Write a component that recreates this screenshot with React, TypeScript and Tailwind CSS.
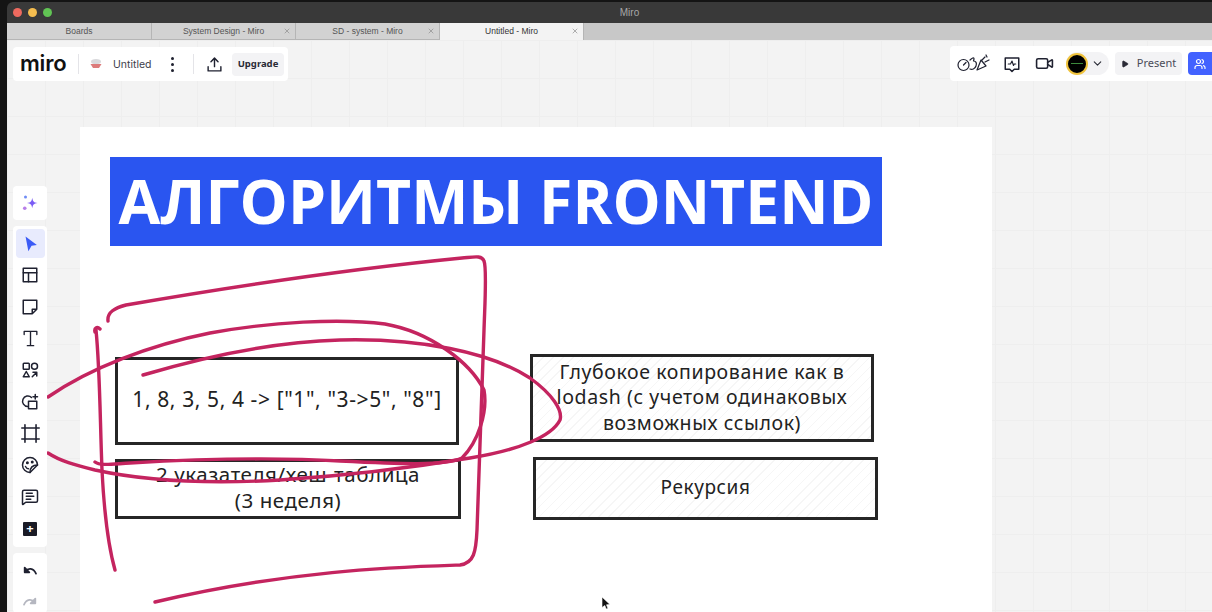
import React from 'react';
import { ChevronDown, MessageSquareText, Play, Users, Video, X } from 'lucide-react';

const sans = 'font-["Noto_Sans",sans-serif]';

const tabs = [
    { title: 'Boards', closable: false, active: false, width: 'w-[145px]' },
    { title: 'System Design - Miro', closable: true, active: false, width: 'w-[144px]' },
    { title: 'SD - system - Miro', closable: true, active: false, width: 'w-[144px]' },
    { title: 'Untitled - Miro', closable: true, active: true, width: 'w-[144px]' },
];

const Icon: React.FC<{ children: React.ReactNode; size?: number }> = ({ children, size = 18 }) => (
    <svg width={size} height={size} viewBox="0 0 24 24" fill="none" stroke="#1f2130" strokeWidth="2" strokeLinecap="round" strokeLinejoin="round">
        {children}
    </svg>
);

const ToolSlot: React.FC<{ children: React.ReactNode; active?: boolean }> = ({ children, active }) => (
    <div className={`w-[29px] h-[29px] mb-[2.7px] flex items-center justify-center rounded ${active ? 'bg-[#e8ebfd]' : ''}`}>{children}</div>
);

const LeftToolbar: React.FC = () => (
    <div className="absolute left-[6px] top-[146px] w-[34px] flex flex-col gap-[6px]">
        <div className="h-[34px] bg-white rounded flex items-center justify-center">
            <svg width="18" height="18" viewBox="0 0 24 24">
                <path d="M15 5 C15.8 10 17 11.4 22 12 C17 12.8 15.8 14 15 19 C14.2 14 13 12.8 8 12 C13 11.4 14.2 10 15 5 Z" fill="#7a5cf5" />
                <circle cx="6" cy="4" r="2" fill="#6f8cf5" />
                <circle cx="5" cy="19" r="2.4" fill="#b77ee8" />
            </svg>
        </div>
        <div className="h-[321px] bg-white rounded flex flex-col items-center pt-[3px]">
            <ToolSlot active>
                <svg width="17" height="17" viewBox="0 0 24 24"><path d="M5 2 L21 14 L13.5 15 L9 23 Z" fill="#3b5bf6" /></svg>
            </ToolSlot>
            <ToolSlot>
                <Icon><rect x="3" y="3" width="18" height="18" /><path d="M3 9 H21 M10 9 V21" /></Icon>
            </ToolSlot>
            <ToolSlot>
                <Icon><path d="M3 3 H21 V15 L15 21 H3 Z M21 15 H15 V21" /></Icon>
            </ToolSlot>
            <ToolSlot>
                <Icon size={19}><path d="M4 7 V3 H20 V7 M12 3 V21 M8 21 H16" strokeWidth="1.7" /></Icon>
            </ToolSlot>
            <ToolSlot>
                <Icon>
                    <rect x="3" y="3" width="8" height="8" rx="1" />
                    <circle cx="18" cy="7" r="4" />
                    <path d="M7 14 L11 21 H3 Z M15 21 L21 15 M16 15 H21 V20" />
                </Icon>
            </ToolSlot>
            <ToolSlot>
                <Icon>
                    <path d="M9 18 A7 7 0 1 1 14 6" />
                    <rect x="10" y="11" width="11" height="10" />
                    <path d="M19 2 V8 M16 5 H22" />
                </Icon>
            </ToolSlot>
            <ToolSlot>
                <Icon size={19}><path d="M5 1 V23 M19 1 V23 M1 5 H23 M1 19 H23" /></Icon>
            </ToolSlot>
            <ToolSlot>
                <Icon>
                    <path d="M12 22 A10 10 0 1 1 22 12 L12 22 Z" />
                    <path d="M12 22 C12 16 15 12 22 12" />
                    <circle cx="8.5" cy="9" r="1" fill="#1f2130" />
                    <circle cx="15" cy="8" r="1" fill="#1f2130" />
                    <path d="M6 14 C7 16 8.5 17 10 17" />
                </Icon>
            </ToolSlot>
            <ToolSlot>
                <MessageSquareText size={18} color="#1f2130" strokeWidth={2} />
            </ToolSlot>
            <ToolSlot>
                <div className="w-[14px] h-[14px] bg-[#1a1b26] rounded-[1px] flex items-center justify-center text-white font-bold text-[13px] leading-none">+</div>
            </ToolSlot>
        </div>
        <div className="h-[60px] bg-white rounded flex flex-col items-center pt-[10px] gap-[15px]">
            <svg width="16" height="16" viewBox="0 0 24 24" fill="none" stroke="#1f2130" strokeWidth="2.6" strokeLinecap="round" strokeLinejoin="round">
                <path d="M4 7 L4 14 L11 14 Z" fill="#1f2130" />
                <path d="M5 13 C9 7 17 7 21 16" />
            </svg>
            <svg width="16" height="16" viewBox="0 0 24 24" fill="none" stroke="#b5b7c0" strokeWidth="2.6" strokeLinecap="round" strokeLinejoin="round">
                <path d="M20 7 L20 14 L13 14 Z" fill="#b5b7c0" />
                <path d="M19 13 C15 7 7 7 3 16" />
            </svg>
        </div>
    </div>
);

const TopLeftPanel: React.FC = () => (
    <div className="absolute left-[6px] top-[7px] w-[275px] h-[34px] bg-white rounded flex items-center">
        <span className='ml-[7px] w-[47px] font-["Inter",sans-serif] font-semibold text-[22px] leading-none tracking-[-0.2px] text-[#111] pb-[3px]'>miro</span>
        <div className="ml-[11px] w-px h-[20px] bg-[#e4e4e8]" />
        <svg className="ml-[10px]" width="14" height="14" viewBox="0 0 14 14">
            <ellipse cx="7" cy="4.5" rx="5" ry="2.6" fill="#d9d9dc" />
            <path d="M1.5 7 H12.5 L10 11 H4 Z" fill="#dc7b7b" />
        </svg>
        <span className='font-["Inter",sans-serif] ml-[10px] w-[38px] pt-[1px] text-[10.5px] whitespace-nowrap text-[#3d3e4a]'>Untitled</span>
        <div className="ml-[20px] flex flex-col gap-[3px]">
            <div className="w-[3px] h-[3px] rounded-full bg-[#1f2130]" />
            <div className="w-[3px] h-[3px] rounded-full bg-[#1f2130]" />
            <div className="w-[3px] h-[3px] rounded-full bg-[#1f2130]" />
        </div>
        <div className="ml-[19px] w-px h-[20px] bg-[#e4e4e8]" />
        <div className="ml-[12px]">
            <Icon size={17}><path d="M12 15 V3 M7 8 L12 3 L17 8 M3 15 V21 H21 V15" /></Icon>
        </div>
        <div className={`${sans} ml-[9px] w-[52px] h-[23px] rounded bg-[#f3f3f5] flex items-center justify-center text-[9.5px] font-bold text-[#2a2b36]`}>Upgrade</div>
    </div>
);

const TopRightPanel: React.FC = () => (
    <div className="absolute left-[943px] top-[6px] w-[262px] h-[35px] bg-white rounded-l flex items-center">
        <svg className="ml-[7px]" width="33" height="20" viewBox="0 0 33 20" fill="none" stroke="#1f2130" strokeWidth="1.2" strokeLinecap="round" strokeLinejoin="round">
            <circle cx="6.5" cy="11" r="5.5" />
            <path d="M6.5 11 L9 8.5" />
            <path d="M13 6 C15 4 17 3 17 5 L16.5 7 C19 7 20 9 19 12 C18 15 15 16 13 15" />
            <path d="M20 16 L24 6 L29 12 Z M25 6 L28 3 M28 8 L32 6 M29 1 L30 3" />
        </svg>
        <div className="ml-[13px]">
            <svg width="18" height="18" viewBox="0 0 24 24" fill="none" stroke="#1f2130" strokeWidth="2" strokeLinecap="round" strokeLinejoin="round">
                <path d="M3 4 H21 V19 H15 L12 22 L9 19 H3 Z" />
                <path d="M7 12 H10 L12 8 L14 14 L15 12 H17" strokeWidth="1.5" />
            </svg>
        </div>
        <Video className="ml-[14px]" size={19} color="#1f2130" strokeWidth={2} />
        <div className="ml-[12px] w-[43px] h-[23px] rounded-full bg-[#f3f3f5] flex items-center">
            <div className="w-[22px] h-[22px] rounded-full bg-black border-2 border-[#f0c33c] flex items-center justify-center">
                <div className="w-[12px] h-px bg-[#3c8a3c]" />
            </div>
            <ChevronDown className="ml-[3px]" size={13} color="#2a2b36" strokeWidth={2} />
        </div>
        <div className={`${sans} ml-[6px] w-[67px] h-[23px] rounded bg-[#f3f3f5] flex items-center justify-center gap-[8px] text-[11px] text-[#4a4b57]`}>
            <Play size={8} fill="#2a2b36" color="#2a2b36" />
            <span>Present</span>
        </div>
        <div className="ml-[6px] flex-1 h-[23px] rounded-l bg-[#4262ff] flex items-center pl-[6px]">
            <Users size={12} color="white" strokeWidth={2.4} />
        </div>
    </div>
);

const hatch = 'bg-[repeating-linear-gradient(135deg,#f6f6f6_0px,#f6f6f6_1px,#ffffff_1px,#ffffff_7px)]';
const boxBase = `${sans} absolute border-[3px] border-[#262626] flex items-center justify-center text-center text-[#222] tracking-[0.6px]`;

const Scribbles: React.FC = () => (
    <svg className="absolute left-[-7px] top-[-40px] pointer-events-none" width="1212" height="612" viewBox="0 0 1212 612" fill="none" stroke="#c4245f" strokeWidth="3.4" strokeLinecap="round" strokeLinejoin="round">
        <path d="M108 321 C107 312 115 308 126 305 C230 287 360 268 462 258 C474 257 482 255 484 261 C487 268 485 300 484 330 C482 400 479 470 477 530 C476 552 474 563 460 565 C400 567 290 570 155 602" />
        <path d="M95 332 C94 328 97 326 100 329 M96 330 C100 370 100 420 102 470 C104 510 108 545 115 570" />
        <path d="M48 397 C90 368 150 345 210 333 C270 322 340 318 385 324 C430 332 470 362 484 390 C488 412 478 442 462 458 C445 466 400 464 340 461 C270 457 200 459 130 463 C112 464 100 466 95 462" />
        <path d="M143 375 C200 358 270 342 340 340 C420 338 490 352 530 378 C552 394 563 410 560 420 C552 436 520 450 470 458 C410 468 340 476 280 480 C210 484 150 482 95 470 C75 465 60 461 48 453" />
    </svg>
);

const Board: React.FC = () => (
    <div className="absolute left-[73px] top-[87px] w-[912px] h-[485px] bg-white">
        <div className='absolute left-[30px] top-[30px] w-[772px] h-[89px] bg-[#2a55f0] flex items-center justify-center font-["Open_Sans",sans-serif] font-bold text-[60.7px] text-white whitespace-nowrap leading-none'>
            АЛГОРИТМЫ FRONTEND
        </div>
        <div className={`${boxBase} left-[35px] top-[230px] w-[344px] h-[88px] text-[21px] pb-[2px]`}>1, 8, 3, 5, 4 -&gt; ["1", "3-&gt;5", "8"]</div>
        <div className={`${boxBase} left-[35px] top-[332px] w-[346px] h-[60px] text-[20.5px] leading-[26px] pb-[4px]`}>2 указателя/хеш-таблица<br />(3 неделя)</div>
        <div className={`${boxBase} ${hatch} left-[450px] top-[227px] w-[344px] h-[88px] text-[19.5px] leading-[25.5px] pb-[2px]`}>Глубокое копирование как в<br />lodash (с учетом одинаковых<br />возможных ссылок)</div>
        <div className={`${boxBase} ${hatch} left-[453px] top-[330px] w-[345px] h-[63px] text-[19px] pb-[3px]`}>Рекурсия</div>
    </div>
);

const App: React.FC = () => {
    return (
        <div className="w-[1212px] h-[612px] bg-[#141414] flex overflow-hidden">
            <div className="w-[7px] shrink-0" />
            <div className="flex-1 flex flex-col pt-[2px] min-w-0">
                <div className="relative h-[21px] bg-[#393939] rounded-tl-md flex items-center justify-center pl-[40px]">
                    <div className="absolute left-[6px] top-[6px] flex gap-[6px]">
                        <div className="w-[9px] h-[9px] rounded-full bg-[#ee6a5f]" />
                        <div className="w-[9px] h-[9px] rounded-full bg-[#f5bd4f]" />
                        <div className="w-[9px] h-[9px] rounded-full bg-[#61c454]" />
                    </div>
                    <span className='font-["Liberation_Sans",sans-serif] text-[10px] text-[#a8a8a8]'>Miro</span>
                </div>
                <div className='h-[17px] bg-[#c8c8c8] flex font-["Liberation_Sans",sans-serif] text-[8.5px] text-[#555]'>
                    {tabs.map((tab) => (
                        <div key={tab.title} className={`${tab.width} relative flex items-center justify-center border-r border-[#b5b5b5] ${tab.active ? 'bg-[#f3f3f3] text-[#333]' : 'bg-[#d2d2d2] border-b'}`}>
                            <span>{tab.title}</span>
                            {tab.closable && <X className="absolute right-[4px] top-[4px]" size={8} color="#8a8a8a" />}
                        </div>
                    ))}
                </div>
                <div className="relative flex-1 bg-[#f3f3f3] bg-[linear-gradient(#eeeeee_1px,transparent_1px),linear-gradient(90deg,#eeeeee_1px,transparent_1px)] bg-[size:38px_38px]">
                    <Board />
                    <Scribbles />
                    <TopLeftPanel />
                    <TopRightPanel />
                    <LeftToolbar />
                    <svg className="absolute left-[594px] top-[556px]" width="12" height="14" viewBox="0 0 12 14">
                        <path d="M1 1 L9 8.5 L5.5 8.8 L7 12.5 L5.2 13 L3.8 9.5 L1 11.5 Z" fill="#111" stroke="#fff" strokeWidth="0.6" />
                    </svg>
                </div>
            </div>
        </div>
    );
};

export default App;
